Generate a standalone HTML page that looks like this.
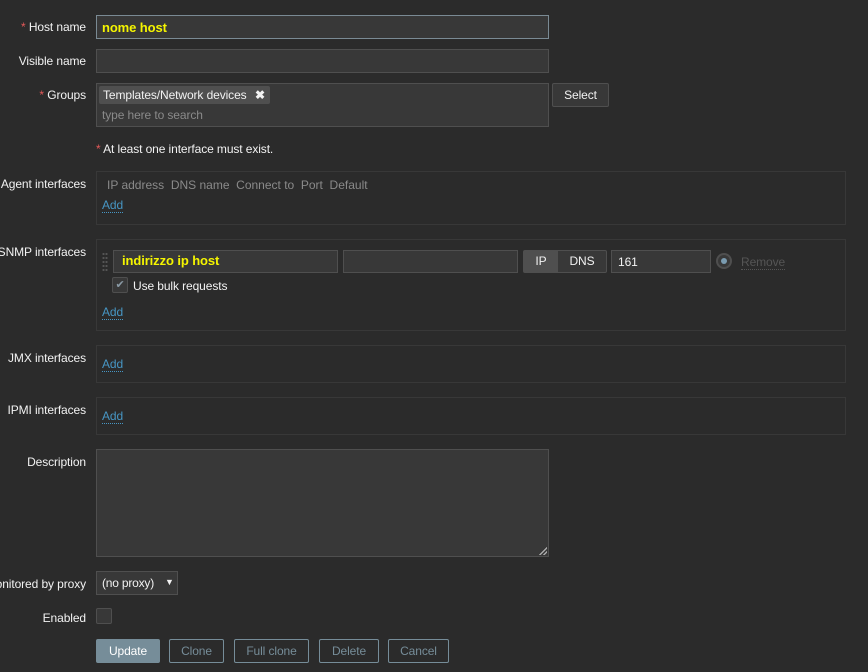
<!DOCTYPE html>
<html><head><meta charset="utf-8"><style>
*{box-sizing:border-box;margin:0;padding:0}
body{width:868px;height:672px;background:#2b2b2b;font-family:"Liberation Sans",Arial,sans-serif;font-size:12px;color:#f2f2f2;position:relative;overflow:hidden;letter-spacing:-0.1px}
.a{position:absolute;white-space:nowrap}
.lbl{position:absolute;right:782px;white-space:nowrap;line-height:14px;text-align:right}
.req{color:#e45959}
.in{position:absolute;background:#383838;border:1px solid #4f4f4f;white-space:nowrap}
.box{position:absolute;border:1px solid #383838;background:#2b2b2b}
.add{position:absolute;color:#4796c4;border-bottom:1px dotted #4796c4;line-height:13px}
.btn{position:absolute;border:1px solid #768d99;color:#768d99;text-align:center;line-height:23px;border-radius:2px}
.y{color:#f5f500;font-weight:bold;font-size:13px}
</style></head><body>
<div class="lbl" style="top:20px"><span class="req">*</span> Host name</div>
<div class="in" style="left:96px;top:15px;width:453px;height:24px;border-color:#7a8a94;padding:4px 5px"><span class="y">nome host</span></div>
<div class="lbl" style="top:54px">Visible name</div>
<div class="in" style="left:96px;top:49px;width:453px;height:24px"></div>
<div class="lbl" style="top:88px"><span class="req">*</span> Groups</div>
<div class="in" style="left:96px;top:83px;width:453px;height:44px"></div>
<div class="a" style="left:99px;top:86px;width:171px;height:18px;background:#4f4f4f;border-radius:2px;padding:2px 4px;line-height:14px;letter-spacing:-0.1px">Templates/Network devices<b style="position:absolute;left:156px;top:2px">✖</b></div>
<div class="a" style="left:102px;top:108px;color:#8a8a8a">type here to search</div>
<div class="a" style="left:552px;top:83px;width:57px;height:24px;background:#383838;border:1px solid #4f4f4f;border-radius:2px;text-align:center;line-height:22px">Select</div>
<div class="a" style="left:96px;top:142px"><span class="req">*</span> At least one interface must exist.</div>
<div class="lbl" style="top:177px">Agent interfaces</div>
<div class="box" style="left:96px;top:171px;width:750px;height:54px"></div>
<div class="a" style="left:107px;top:178px;color:#8a8a8a;letter-spacing:0">IP address&nbsp; DNS name&nbsp; Connect to&nbsp; Port&nbsp; Default</div>
<div class="add" style="left:102px;top:199px">Add</div>
<div class="lbl" style="top:245px">SNMP interfaces</div>
<div class="box" style="left:96px;top:239px;width:750px;height:92px"></div>
<div class="a" style="left:102px;top:252px;width:6px;height:19px;background:radial-gradient(circle,#555 1px,transparent 1.2px) 0 0/3px 4px"></div>
<div class="in" style="left:113px;top:250px;width:225px;height:23px;padding:2px 8px"><span class="y">indirizzo ip host</span></div>
<div class="in" style="left:343px;top:250px;width:175px;height:23px"></div>
<div class="a" style="left:523px;top:250px;width:84px;height:23px;border:1px solid #4f4f4f;border-radius:2px;background:#383838;line-height:21px"><span class="a" style="left:0;top:0;width:34px;height:21px;background:#4f4f4f;text-align:center">IP</span><span class="a" style="left:34px;top:0;width:48px;text-align:center">DNS</span></div>
<div class="in" style="left:611px;top:250px;width:100px;height:23px;padding:4px 6px">161</div>
<div class="a" style="left:716px;top:253px;width:16px;height:16px;border-radius:50%;border:2px solid #4f4f4f;background:#383838"><div style="margin:3px;width:6px;height:6px;border-radius:50%;background:#7a9bb0"></div></div>
<div class="a" style="left:741px;top:256px;color:#555;border-bottom:1px dotted #555;line-height:13px">Remove</div>
<div class="a" style="left:112px;top:277px;width:16px;height:16px;border:1px solid #4f4f4f;background:#383838;border-radius:2px;color:#8a9aa5;font-size:11px;text-align:center;line-height:14px">✔</div>
<div class="a" style="left:133px;top:279px">Use bulk requests</div>
<div class="add" style="left:102px;top:306px">Add</div>
<div class="lbl" style="top:351px">JMX interfaces</div>
<div class="box" style="left:96px;top:345px;width:750px;height:38px"></div>
<div class="add" style="left:102px;top:358px">Add</div>
<div class="lbl" style="top:403px">IPMI interfaces</div>
<div class="box" style="left:96px;top:397px;width:750px;height:38px"></div>
<div class="add" style="left:102px;top:410px">Add</div>
<div class="lbl" style="top:455px">Description</div>
<div class="in" style="left:96px;top:449px;width:453px;height:108px"></div>
<div class="a" style="left:539px;top:547px;width:8px;height:8px;background:linear-gradient(135deg,transparent 50%,#aaa 50%,#aaa 60%,transparent 60%,transparent 75%,#aaa 75%,#aaa 85%,transparent 85%)"></div>
<div class="lbl" style="top:577px">onitored by proxy</div>
<div class="in" style="left:96px;top:571px;width:82px;height:24px;padding:4px 5px;letter-spacing:-0.2px">(no proxy)<span style="font-size:9px;position:absolute;left:68px;top:5px">▼</span></div>
<div class="lbl" style="top:611px">Enabled</div>
<div class="in" style="left:96px;top:608px;width:16px;height:16px;border-radius:2px"></div>
<div class="btn" style="left:96px;top:639px;width:64px;height:24px;background:#768d99;color:#fff;border-color:#768d99">Update</div>
<div class="btn" style="left:169px;top:639px;width:55px;height:24px">Clone</div>
<div class="btn" style="left:234px;top:639px;width:75px;height:24px">Full clone</div>
<div class="btn" style="left:319px;top:639px;width:60px;height:24px">Delete</div>
<div class="btn" style="left:388px;top:639px;width:61px;height:24px">Cancel</div>
</body></html>
